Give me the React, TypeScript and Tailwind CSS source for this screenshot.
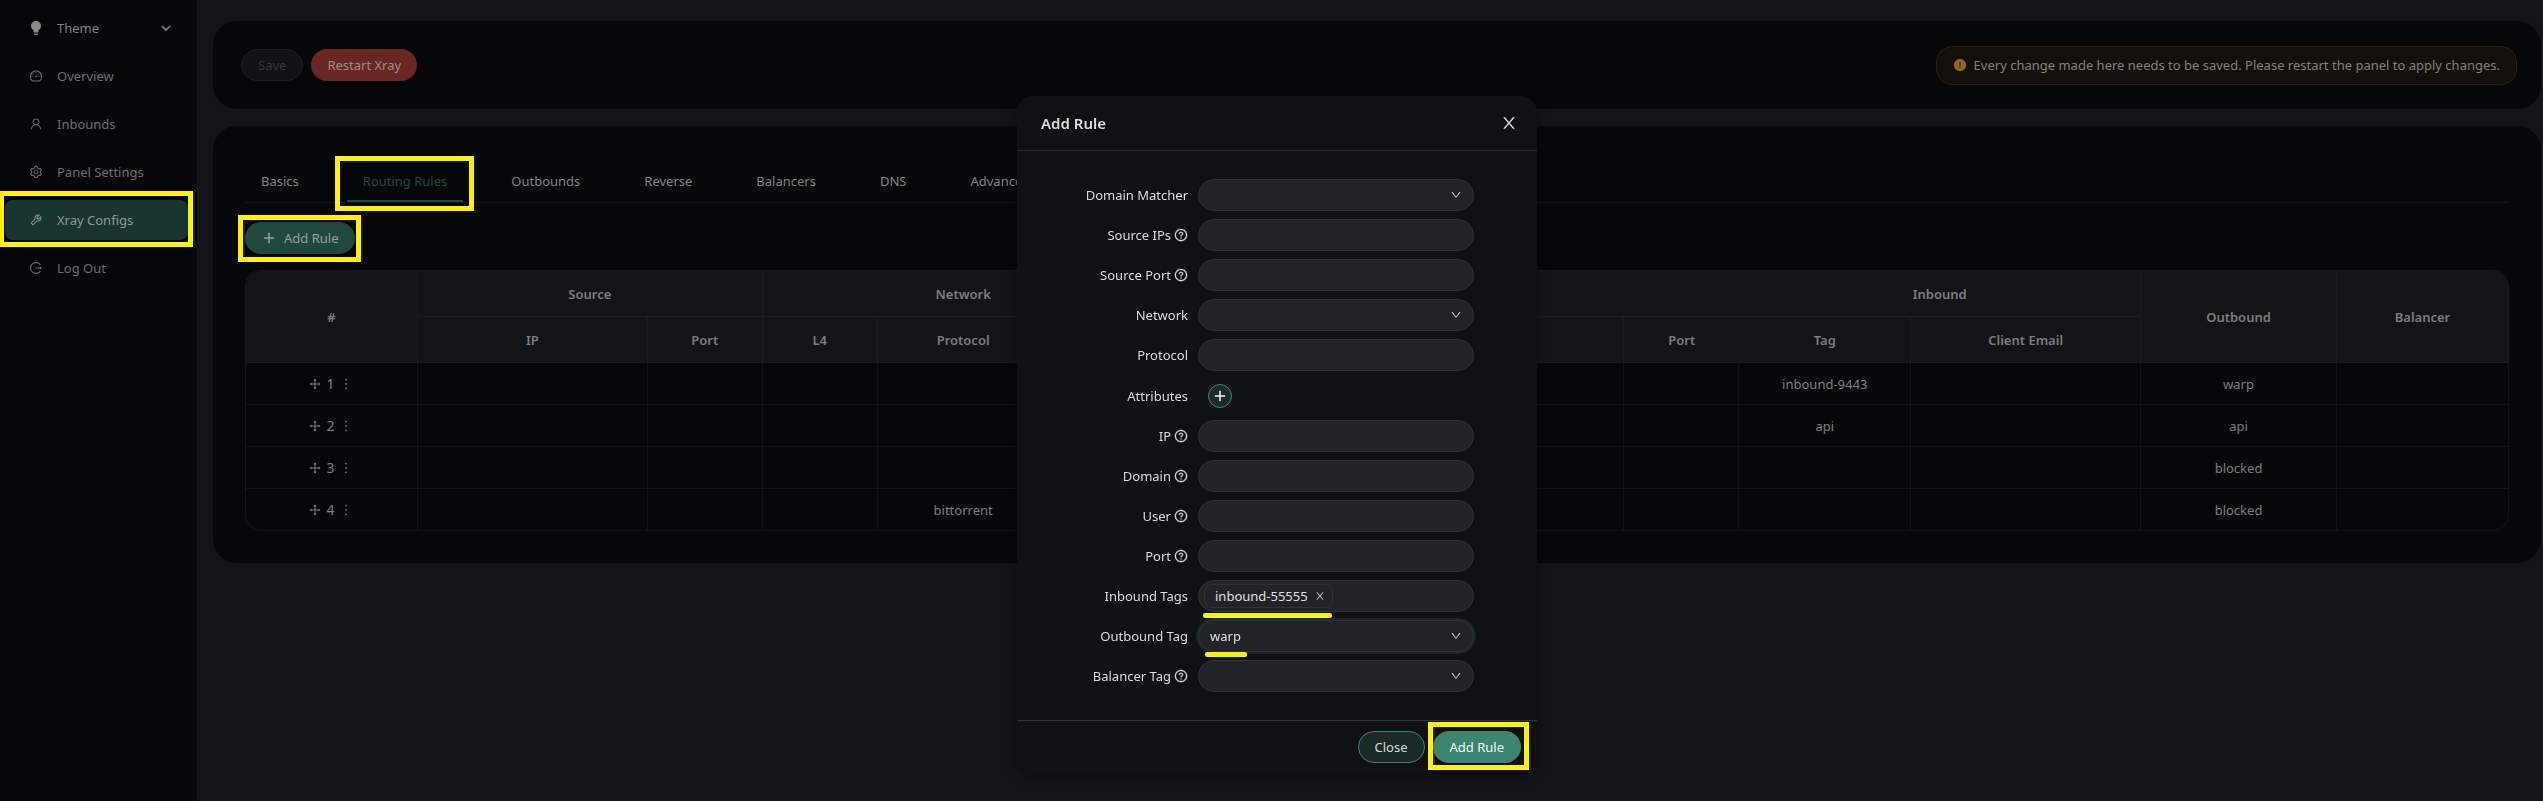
import React from "react";
import {
  AiFillExclamationCircle,
  AiOutlineDashboard,
  AiOutlineDown,
  AiOutlineDrag,
  AiOutlineLogout,
  AiOutlineMore,
  AiOutlinePlus,
  AiOutlineQuestionCircle,
  AiOutlineSetting,
  AiOutlineTool,
  AiOutlineUser,
} from "react-icons/ai";
import type { IconType } from "react-icons";

const navItems: { label: string; icon: IconType; active?: boolean }[] = [
  { label: "Overview", icon: AiOutlineDashboard },
  { label: "Inbounds", icon: AiOutlineUser },
  { label: "Panel Settings", icon: AiOutlineSetting },
  { label: "Xray Configs", icon: AiOutlineTool, active: true },
  { label: "Log Out", icon: AiOutlineLogout },
];

const tabs = ["Basics", "Routing Rules", "Outbounds", "Reverse", "Balancers", "DNS", "Advanced"];

const columnWeights = [172, 230, 115, 115, 172, 115, 230, 230, 115, 172, 230, 196, 172];

const rules = [
  { id: 1, protocol: "", tag: "inbound-9443", outbound: "warp" },
  { id: 2, protocol: "", tag: "api", outbound: "api" },
  { id: 3, protocol: "", tag: "", outbound: "blocked" },
  { id: 4, protocol: "bittorrent", tag: "", outbound: "blocked" },
];

type Field = {
  id: string;
  label: string;
  help?: boolean;
  kind: "input" | "select" | "button" | "tags";
  value?: string;
  focused?: boolean;
};

const fields: Field[] = [
  { id: "domain-matcher", label: "Domain Matcher", kind: "select" },
  { id: "source-ips", label: "Source IPs", help: true, kind: "input" },
  { id: "source-port", label: "Source Port", help: true, kind: "input" },
  { id: "network", label: "Network", kind: "select" },
  { id: "protocol", label: "Protocol", kind: "input" },
  { id: "attributes", label: "Attributes", kind: "button" },
  { id: "ip", label: "IP", help: true, kind: "input" },
  { id: "domain", label: "Domain", help: true, kind: "input" },
  { id: "user", label: "User", help: true, kind: "input" },
  { id: "port", label: "Port", help: true, kind: "input" },
  { id: "inbound-tags", label: "Inbound Tags", kind: "tags", value: "inbound-55555" },
  { id: "outbound-tag", label: "Outbound Tag", kind: "select", value: "warp", focused: true },
  { id: "balancer-tag", label: "Balancer Tag", help: true, kind: "select" },
];

function Highlight({ className }: { className: string }) {
  return <span aria-hidden="true" className={`pointer-events-none absolute border-5 border-[#fff200] ${className}`} />;
}

function BulbIcon({ className }: { className: string }) {
  return (
    <svg viewBox="0 0 14 14" fill="currentColor" aria-hidden="true" className={className}>
      <path d="M7 0a5 5 0 0 0-5 5c0 1.9 1 3.4 2.6 4.3V11.5h4.8V9.300C11 8.400 12 6.900 12 5a5 5 0 0 0-5-5z" />
      <rect x="5" y="12.600" width="4" height="1.200" rx="0.300" />
    </svg>
  );
}

function CloseIcon({ className }: { className: string }) {
  return (
    <svg viewBox="64 64 896 896" fill="currentColor" aria-hidden="true" className={className}>
      <path d="M563.8 512l262.5-312.9c4.4-5.2.7-13.1-6.1-13.1h-79.8c-4.7 0-9.2 2.1-12.3 5.7L511.6 449.8 295.1 191.7c-3-3.6-7.5-5.7-12.3-5.7H203c-6.8 0-10.5 7.9-6.1 13.1L459.4 512 196.9 824.9A7.95 7.95 0 0 0 203 838h79.8c4.7 0 9.2-2.1 12.3-5.7l216.5-258.1 216.5 258.1c3 3.6 7.5 5.7 12.3 5.7h79.8c6.8 0 10.5-7.9 6.1-13.1L563.8 512z" />
    </svg>
  );
}

function Sidebar() {
  return (
    <aside className="w-[197px] shrink-0 bg-[#060709] pt-2">
      <nav className="flex flex-col gap-2 pr-[9px] pl-[5px]">
        <button type="button" className="flex h-10 items-center rounded-lg pr-[17px] pl-6 text-[#808182]">
          <BulbIcon className="size-[14px] shrink-0 text-[#8a8a8a]" />
          <span className="ml-[14px] flex-1 text-left">Theme</span>
          <svg viewBox="0 0 10 10" className="size-[10px]" fill="none" stroke="currentColor" strokeWidth="1.6" aria-hidden="true">
            <path d="M1 3l4 4 4-4" />
          </svg>
        </button>
        {navItems.map(({ label, icon: Icon, active }) => (
          <a
            key={label}
            href="#"
            className={`relative flex h-10 items-center rounded-lg pl-6 ${active ? "bg-[#18352f] text-[#959595]" : "text-[#6c6d6e]"}`}
          >
            <Icon className="size-[14px] shrink-0" />
            <span className="ml-[14px]">{label}</span>
            {active && <Highlight className="-top-[9px] -right-[5px] -bottom-[7px] -left-[6px]" />}
          </a>
        ))}
      </nav>
    </aside>
  );
}

const th = "border-r border-b border-[#1b1c1f] bg-[#131417] font-semibold";
const thOpen = "border-b border-[#1b1c1f] bg-[#131417] font-semibold";
const td = "h-[42px] border-r border-b border-[#131416] text-center";

function RulesTable() {
  const total = columnWeights.reduce((sum, w) => sum + w, 0);
  return (
    <div className="overflow-hidden rounded-2xl border-t border-l border-[#17181a]">
      <table className="w-full table-fixed border-separate border-spacing-0 text-[#7c7d7e]">
        <colgroup>
          {columnWeights.map((w, i) => (
            <col key={i} style={{ width: `${(w / total) * 100}%` }} />
          ))}
        </colgroup>
        <thead>
          <tr className="h-[46px]">
            <th rowSpan={2} className={th}>#</th>
            <th colSpan={2} className={th}>Source</th>
            <th colSpan={3} className={th}>Network</th>
            <th colSpan={3} className={thOpen}>Destination</th>
            <th colSpan={2} className={th}>Inbound</th>
            <th rowSpan={2} className={th}>Outbound</th>
            <th rowSpan={2} className={`${th} rounded-tr-2xl`}>Balancer</th>
          </tr>
          <tr className="h-[46px]">
            <th className={th}>IP</th>
            <th className={th}>Port</th>
            <th className={th}>L4</th>
            <th className={th}>Protocol</th>
            <th className={th}>Attrs</th>
            <th className={th}>IP</th>
            <th className={th} aria-label="Domain" />
            <th className={thOpen}>Port</th>
            <th className={th}>Tag</th>
            <th className={th}>Client Email</th>
          </tr>
        </thead>
        <tbody>
          {rules.map((rule, index) => {
            const last = index === rules.length - 1;
            return (
              <tr key={rule.id}>
                <td className={`${td} ${last ? "rounded-bl-2xl" : ""}`}>
                  <span className="flex items-center justify-center gap-1">
                    <AiOutlineDrag className="size-[14px]" />
                    <span className="text-[14px]">{rule.id}</span>
                    <button type="button" aria-label={`Actions for rule ${rule.id}`}>
                      <AiOutlineMore className="size-4" />
                    </button>
                  </span>
                </td>
                <td className={td} />
                <td className={td} />
                <td className={td} />
                <td className={td}>{rule.protocol}</td>
                <td className={td} />
                <td className={td} />
                <td className={td} />
                <td className={td} />
                <td className={td}>{rule.tag}</td>
                <td className={td} />
                <td className={td}>{rule.outbound}</td>
                <td className={`${td} ${last ? "rounded-br-2xl" : ""}`} />
              </tr>
            );
          })}
        </tbody>
      </table>
    </div>
  );
}

const box = "h-8 w-full rounded-2xl border border-[#2f3136] bg-[#222327] text-[#e0e0e0] outline-none";

function FieldControl({ field }: { field: Field }) {
  if (field.kind === "button") {
    return (
      <button
        id={field.id}
        type="button"
        aria-label="Add attribute"
        className="ml-[10px] flex size-6 items-center justify-center rounded-full border border-[#3c8571] bg-[#1a2a26] text-[#f0f0f0]"
      >
        <AiOutlinePlus className="size-[14px]" stroke="currentColor" strokeWidth="40" />
      </button>
    );
  }
  if (field.kind === "tags") {
    return (
      <div className={`${box} relative flex items-center pr-[11px] pl-[5px]`}>
        <span className="flex h-6 items-center gap-[7px] rounded-lg border border-[#2f3136] pr-[7px] pl-[10px]">
          {field.value}
          <button type="button" aria-label={`Remove ${field.value}`}>
            <CloseIcon className="size-[10px] text-[#c8c8c8]" />
          </button>
        </span>
        <input id={field.id} className="min-w-0 flex-1 bg-transparent outline-none" />
        <span aria-hidden="true" className="absolute top-8 left-1 h-[5px] w-[129px] rounded-xs bg-[#fff200]" />
      </div>
    );
  }
  if (field.kind === "select") {
    return (
      <div className="relative">
        <select
          id={field.id}
          defaultValue={field.value ?? ""}
          className={`${box} block appearance-none px-[11px] ${field.focused ? "shadow-[0_0_0_2px_#182724]" : ""}`}
        >
          <option value={field.value ?? ""}>{field.value ?? ""}</option>
        </select>
        <AiOutlineDown className="pointer-events-none absolute top-[10px] right-3 size-3 text-[#d0d0d0]" />
        {field.focused && (
          <span aria-hidden="true" className="absolute top-8 left-[7px] h-[5px] w-[42px] rounded-xs bg-[#fff200]" />
        )}
      </div>
    );
  }
  return <input id={field.id} type="text" className={`${box} px-[11px]`} />;
}

function AddRuleDialog() {
  return (
    <div className="fixed inset-0 flex items-start justify-center pt-24 pl-[11px]">
      <section
        role="dialog"
        aria-labelledby="dialog-title"
        className="w-[520px] rounded-2xl bg-[#101113] text-[#dcdcdc] shadow-[0_4px_12px_rgba(0,0,0,0.3)]"
      >
        <header className="flex h-[55px] items-center justify-between border-b border-[#2a2b2e] pr-5 pl-6">
          <h2 id="dialog-title" className="text-[15px] font-semibold">Add Rule</h2>
          <button type="button" aria-label="Close dialog">
            <CloseIcon className="size-4" />
          </button>
        </header>
        <form className="flex flex-col gap-2 px-6 py-7">
          {fields.map((field) => (
            <div key={field.id} className={`flex items-center ${field.kind === "button" ? "h-[33px]" : "h-8"}`}>
              <label htmlFor={field.id} className="mr-[10px] flex w-[147px] items-center justify-end gap-[3px]">
                {field.label}
                {field.help && (
                  <AiOutlineQuestionCircle className="size-[14px]" stroke="currentColor" strokeWidth="20" />
                )}
              </label>
              <div className="w-[276px]">
                <FieldControl field={field} />
              </div>
            </div>
          ))}
        </form>
        <footer className="flex justify-end gap-2 border-t border-[#303134] px-4 py-[10px]">
          <button type="button" className="h-8 rounded-2xl border border-[#3c8571] bg-[#1a2a26] px-4">Close</button>
          <button type="button" className="relative h-8 rounded-2xl bg-[#3c8571] px-[17px] text-[#f5f8f7]">
            Add Rule
            <Highlight className="-top-[9px] -right-2 -bottom-[7px] -left-[5px]" />
          </button>
        </footer>
      </section>
    </div>
  );
}

export default function App() {
  return (
    <div className="flex min-h-screen bg-[#131417] font-['Noto_Sans','Open_Sans',sans-serif] text-[13px] leading-[22px]">
      <Sidebar />
      <main className="flex min-w-0 flex-1 flex-col gap-[17px] pt-[21px] pr-[2px] pl-4">
        <section className="flex h-[88px] items-center justify-between rounded-3xl bg-[#060709] pr-6 pl-7">
          <div className="flex gap-2">
            <button type="button" disabled className="h-8 rounded-2xl border border-[#1d1d1e] bg-[#111213] px-4 text-[#393a3a]">
              Save
            </button>
            <button type="button" className="h-8 rounded-2xl bg-[#6a2722] px-4 text-[#9b8c8b]">Restart Xray</button>
          </div>
          <p className="flex h-[39px] items-center gap-[7px] rounded-2xl border border-[#2d1f0d] bg-[#130f0a] px-4 text-[#82817f]">
            <AiFillExclamationCircle className="size-[14px] text-[#8e671e]" />
            Every change made here needs to be saved. Please restart the panel to apply changes.
          </p>
        </section>

        <section className="rounded-3xl bg-[#060709] px-8 pt-[34px] pb-8">
          <div className="flex gap-8 border-b border-[#131416]" role="tablist">
            {tabs.map((tab, index) => (
              <button
                key={tab}
                role="tab"
                type="button"
                aria-selected={index === 1}
                className={
                  index === 1
                    ? "relative h-[42px] shrink-0 px-4 text-[#20493e] shadow-[inset_0_-2px_0_#20493e]"
                    : "h-[42px] shrink-0 px-4 text-[#828384]"
                }
              >
                {tab}
                {index === 1 && <Highlight className="-top-1 -right-[11px] -bottom-[9px] -left-3" />}
              </button>
            ))}
          </div>
          <div className="flex pt-[19px] pb-4">
            <button type="button" className="relative flex h-8 items-center gap-2 rounded-2xl bg-[#20493e] px-[17px] text-[#979e9c]">
              <AiOutlinePlus className="size-[14px]" stroke="currentColor" strokeWidth="40" />
              Add Rule
              <Highlight className="-top-[7px] -right-[6px] -bottom-2 -left-[7px]" />
            </button>
          </div>
          <RulesTable />
        </section>
      </main>
      <AddRuleDialog />
    </div>
  );
}
